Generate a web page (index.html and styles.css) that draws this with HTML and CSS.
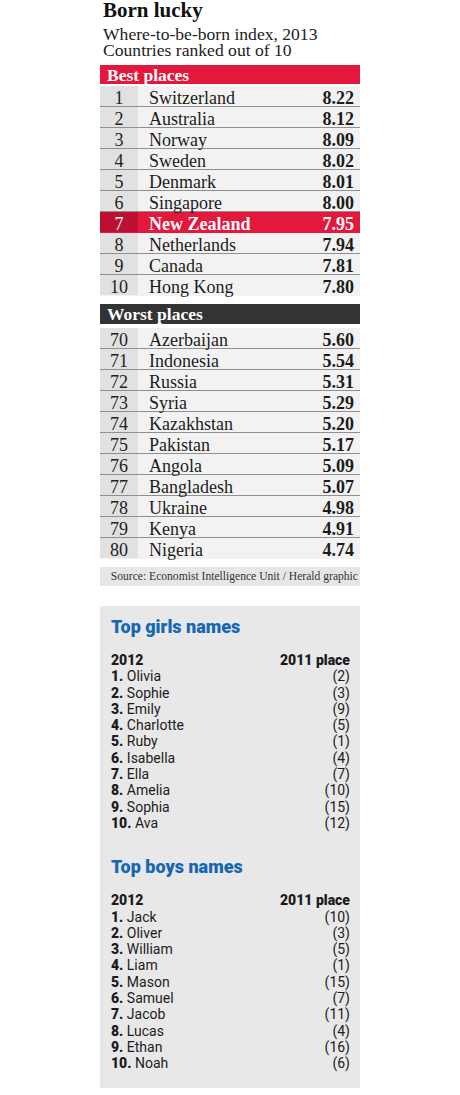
FILE: index.html
```html
<!DOCTYPE html>
<html lang="en">
<head>
    <meta charset="UTF-8">
    <meta name="viewport" content="width=device-width, initial-scale=1.0">
    <title>Born lucky</title>
    <link rel="stylesheet" href="styles.css">
</head>
<body>
    <div class="graphic">
        <!-- Heading -->
        <h1 class="title">Born lucky</h1>
        <div class="subtitle">
            <div class="subtitle-line">Where-to-be-born index, 2013</div>
            <div class="subtitle-line">Countries ranked out of 10</div>
        </div>

        <!-- Best places -->
        <div class="band band-best">Best places</div>
        <ul class="rank-list">
            <li class="rank-row"><span class="rank">1</span><span class="country">Switzerland</span><span class="score">8.22</span></li>
            <li class="rank-row"><span class="rank">2</span><span class="country">Australia</span><span class="score">8.12</span></li>
            <li class="rank-row"><span class="rank">3</span><span class="country">Norway</span><span class="score">8.09</span></li>
            <li class="rank-row"><span class="rank">4</span><span class="country">Sweden</span><span class="score">8.02</span></li>
            <li class="rank-row"><span class="rank">5</span><span class="country">Denmark</span><span class="score">8.01</span></li>
            <li class="rank-row"><span class="rank">6</span><span class="country">Singapore</span><span class="score">8.00</span></li>
            <li class="rank-row highlight"><span class="rank">7</span><span class="country">New Zealand</span><span class="score">7.95</span></li>
            <li class="rank-row"><span class="rank">8</span><span class="country">Netherlands</span><span class="score">7.94</span></li>
            <li class="rank-row"><span class="rank">9</span><span class="country">Canada</span><span class="score">7.81</span></li>
            <li class="rank-row"><span class="rank">10</span><span class="country">Hong Kong</span><span class="score">7.80</span></li>
        </ul>

        <!-- Worst places -->
        <div class="band band-worst">Worst places</div>
        <ul class="rank-list rank-list-worst">
            <li class="rank-row"><span class="rank">70</span><span class="country">Azerbaijan</span><span class="score">5.60</span></li>
            <li class="rank-row"><span class="rank">71</span><span class="country">Indonesia</span><span class="score">5.54</span></li>
            <li class="rank-row"><span class="rank">72</span><span class="country">Russia</span><span class="score">5.31</span></li>
            <li class="rank-row"><span class="rank">73</span><span class="country">Syria</span><span class="score">5.29</span></li>
            <li class="rank-row"><span class="rank">74</span><span class="country">Kazakhstan</span><span class="score">5.20</span></li>
            <li class="rank-row"><span class="rank">75</span><span class="country">Pakistan</span><span class="score">5.17</span></li>
            <li class="rank-row"><span class="rank">76</span><span class="country">Angola</span><span class="score">5.09</span></li>
            <li class="rank-row"><span class="rank">77</span><span class="country">Bangladesh</span><span class="score">5.07</span></li>
            <li class="rank-row"><span class="rank">78</span><span class="country">Ukraine</span><span class="score">4.98</span></li>
            <li class="rank-row"><span class="rank">79</span><span class="country">Kenya</span><span class="score">4.91</span></li>
            <li class="rank-row"><span class="rank">80</span><span class="country">Nigeria</span><span class="score">4.74</span></li>
        </ul>

        <div class="source">Source: Economist Intelligence Unit / Herald graphic</div>

        <!-- Baby names -->
        <div class="names-box">
            <h2 class="names-title">Top girls names</h2>
            <ul class="names-list">
                <li class="names-row names-head"><span>2012</span><span>2011 place</span></li>
                <li class="names-row"><span><b>1.</b> Olivia</span><span>(2)</span></li>
                <li class="names-row"><span><b>2.</b> Sophie</span><span>(3)</span></li>
                <li class="names-row"><span><b>3.</b> Emily</span><span>(9)</span></li>
                <li class="names-row"><span><b>4.</b> Charlotte</span><span>(5)</span></li>
                <li class="names-row"><span><b>5.</b> Ruby</span><span>(1)</span></li>
                <li class="names-row"><span><b>6.</b> Isabella</span><span>(4)</span></li>
                <li class="names-row"><span><b>7.</b> Ella</span><span>(7)</span></li>
                <li class="names-row"><span><b>8.</b> Amelia</span><span>(10)</span></li>
                <li class="names-row"><span><b>9.</b> Sophia</span><span>(15)</span></li>
                <li class="names-row"><span><b>10.</b> Ava</span><span>(12)</span></li>
            </ul>

            <h2 class="names-title names-title-next">Top boys names</h2>
            <ul class="names-list">
                <li class="names-row names-head"><span>2012</span><span>2011 place</span></li>
                <li class="names-row"><span><b>1.</b> Jack</span><span>(10)</span></li>
                <li class="names-row"><span><b>2.</b> Oliver</span><span>(3)</span></li>
                <li class="names-row"><span><b>3.</b> William</span><span>(5)</span></li>
                <li class="names-row"><span><b>4.</b> Liam</span><span>(1)</span></li>
                <li class="names-row"><span><b>5.</b> Mason</span><span>(15)</span></li>
                <li class="names-row"><span><b>6.</b> Samuel</span><span>(7)</span></li>
                <li class="names-row"><span><b>7.</b> Jacob</span><span>(11)</span></li>
                <li class="names-row"><span><b>8.</b> Lucas</span><span>(4)</span></li>
                <li class="names-row"><span><b>9.</b> Ethan</span><span>(16)</span></li>
                <li class="names-row"><span><b>10.</b> Noah</span><span>(6)</span></li>
            </ul>
        </div>
    </div>
</body>
</html>
```

FILE: styles.css
```css
/* --- GENERAL --- */
body {
    margin: 0;
    background: #ffffff;
    color: #1c1c1c;
    font-family: "Liberation Serif", "Times New Roman", serif;
}

.graphic {
    width: 260px;
    margin: 0 auto;
}

/* --- HEADING --- */
.title {
    margin: 0;
    padding-left: 3px;
    font-size: 21px;
    line-height: 21px;
    font-weight: bold;
    color: #111111;
}

.subtitle {
    margin-top: 5px;
    padding-left: 3px;
    font-size: 17.6px;
    color: #222222;
}

.subtitle-line {
    height: 16px;
    line-height: 16px;
}

/* --- BANDS --- */
.band {
    height: 19px;
    line-height: 20px;
    padding-left: 7px;
    font-size: 17.5px;
    font-weight: bold;
    color: #ffffff;
}

.band-best {
    margin-top: 7px;
    background: #e4173d;
}

.band-worst {
    margin-top: 8px;
    height: 20px;
    line-height: 21px;
    background: #333333;
}

/* --- RANK TABLE --- */
.rank-list {
    list-style: none;
    margin: 2px 0 0;
    padding: 0;
}

.rank-list-worst {
    margin-top: 4px;
}

.rank-row {
    display: flex;
    height: 21px;
    box-sizing: border-box;
    border-bottom: 1px solid #8f8f8f;
    background: #f2f2f2;
    font-size: 18px;
    line-height: 24px;
}

.rank-row:last-child {
    border-bottom-color: #f2f2f2;
}

.rank {
    width: 38px;
    flex-shrink: 0;
    text-align: center;
    background: #e1e1e1;
    color: #222222;
}

.country {
    flex: 1;
    padding-left: 11px;
}

.score {
    padding-right: 6px;
    font-weight: bold;
}

.highlight {
    background: #e4173d;
    border-bottom-color: #e4173d;
    color: #ffffff;
}

.highlight .rank {
    background: #bd0f31;
    color: #ffffff;
}

.highlight .country {
    font-weight: bold;
}

/* --- SOURCE --- */
.source {
    margin-top: 8px;
    height: 19px;
    line-height: 20px;
    padding-right: 2px;
    background: #e6e6e6;
    font-size: 11.6px;
    text-align: right;
    color: #333333;
    white-space: nowrap;
}

/* --- NAMES BOX --- */
.names-box {
    margin-top: 20px;
    padding: 11px 10px 16px 11px;
    background: #e8e8e8;
    font-family: Roboto, "Liberation Sans", sans-serif;
}

.names-title {
    margin: 0 0 15px;
    font-size: 18px;
    line-height: 20px;
    font-weight: 900;
    color: #1667b3;
}

.names-title-next {
    margin-top: 26px;
}

.names-list {
    list-style: none;
    margin: 0;
    padding: 0;
}

.names-row {
    display: flex;
    justify-content: space-between;
    font-size: 14px;
    line-height: 16.3px;
    color: #1c1c1c;
}

.names-row b,
.names-head {
    font-weight: 900;
}
```
